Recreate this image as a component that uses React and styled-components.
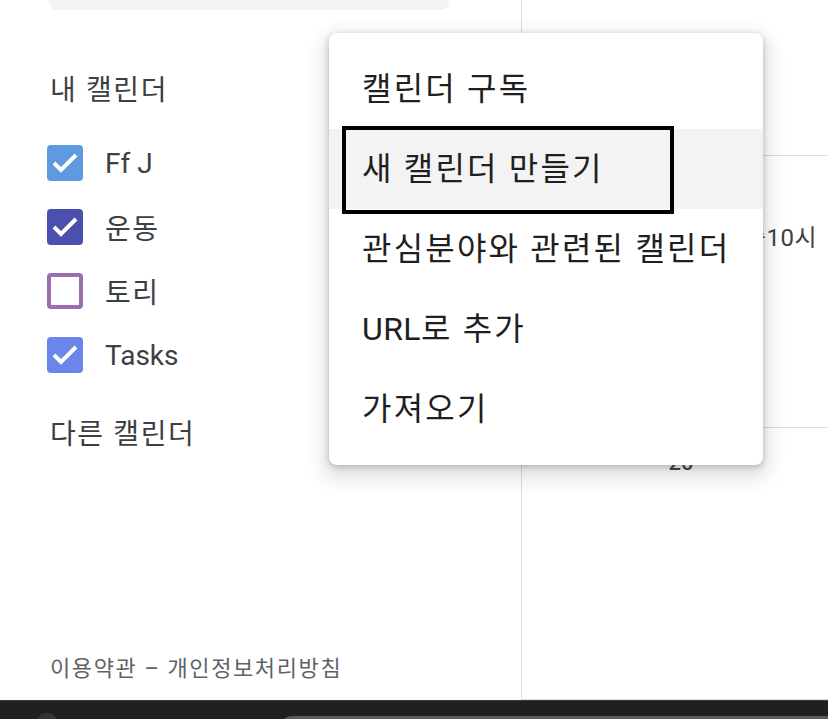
import React from 'react';
import styled, { createGlobalStyle } from 'styled-components';

const GlobalStyle = createGlobalStyle`
  html, body {
    margin: 0;
    padding: 0;
    background: #ffffff;
  }
  body {
    font-family: Roboto, "Noto Sans CJK KR", sans-serif;
    overflow: hidden;
  }
`;

const Page = styled.div`
  position: relative;
  width: 828px;
  height: 719px;
  display: flex;
  flex-direction: column;
  overflow: hidden;
`;

const Main = styled.div`
  height: 701px;
  display: flex;
  background: #ffffff;
`;

const Sidebar = styled.aside`
  width: 521px;
  flex-shrink: 0;
  border-right: 1px solid #dadce0;
  display: flex;
  flex-direction: column;
`;

const SearchStub = styled.div`
  height: 10px;
  margin: 0 72px 0 49px;
  background: #f1f3f4;
  border-radius: 0 0 8px 8px;
`;

const SectionTitle = styled.div`
  height: 40px;
  line-height: 40px;
  padding-left: 50px;
  margin-top: ${(p) => p.top}px;
  font-size: 28px;
  letter-spacing: 1.6px;
  color: #3c4043;
`;

const CalendarList = styled.ul`
  list-style: none;
  margin: 20px 0 0;
  padding: 0;
`;

const CalendarRow = styled.li`
  height: 64px;
  display: flex;
  align-items: center;
  padding-left: 47px;
  gap: 22px;
  font-size: 28px;
  letter-spacing: ${(p) => (p.latin ? '0' : '1.6px')};
  color: #3c4043;
`;

const Box = styled.span`
  width: 36px;
  height: 36px;
  box-sizing: border-box;
  border-radius: 4px;
  display: flex;
  align-items: center;
  justify-content: center;
  background: ${(p) => (p.checked ? p.color : '#ffffff')};
  border: ${(p) => (p.checked ? 'none' : `4px solid ${p.color}`)};
`;

const Footer = styled.div`
  margin-top: auto;
  margin-bottom: 16px;
  padding-left: 50px;
  font-size: 22px;
  letter-spacing: 1.6px;
  line-height: 30px;
  color: #5f6368;
`;

const GridArea = styled.div`
  flex: 1;
  overflow: hidden;
  display: flex;
`;

const DayColumn = styled.div`
  width: 318px;
  flex-shrink: 0;
  display: flex;
  flex-direction: column;
`;

const Cell = styled.div`
  box-sizing: border-box;
  height: ${(p) => p.h}px;
  border-bottom: 1px solid #dadce0;
  display: flex;
  flex-direction: column;
`;

const DateLabel = styled.div`
  margin-top: 21px;
  text-align: center;
  font-size: 22px;
  line-height: 28px;
  font-weight: 500;
  color: #3c4043;
`;

const EventText = styled.div`
  margin-top: 67px;
  margin-left: 222px;
  font-size: 24px;
  line-height: 30px;
  letter-spacing: 0.5px;
  white-space: nowrap;
  color: #3c4043;
`;

const Taskbar = styled.div`
  flex: 1;
  background: #202020;
  border-top: 1px solid #3a3a3a;
  display: flex;
  align-items: flex-start;
  padding-top: 12px;
  gap: 222px;
`;

const TaskButton = styled.span`
  margin-left: 36px;
  width: 22px;
  height: 22px;
  border-radius: 50%;
  background: #353535;
`;

const TaskSearch = styled.span`
  margin-top: 3px;
  flex: 1;
  height: 24px;
  border-radius: 12px 0 0 12px;
  background: #5b5b5b;
`;

const Menu = styled.ul`
  position: absolute;
  left: 329px;
  top: 33px;
  width: 434px;
  margin: 0;
  padding: 16px 0;
  list-style: none;
  background: #ffffff;
  border-radius: 8px;
  box-shadow: 0 8px 18px 6px rgba(60, 64, 67, 0.15),
    0 2px 6px rgba(60, 64, 67, 0.3);
`;

const MenuItem = styled.li`
  position: relative;
  height: 80px;
  line-height: 80px;
  padding-left: 33px;
  font-size: 32px;
  letter-spacing: 2.2px;
  color: #1f1f1f;
  white-space: nowrap;
  background: ${(p) => (p.active ? '#f3f3f3' : 'transparent')};
`;

const Latin = styled.span`
  letter-spacing: 0.4px;
`;

const FocusRing = styled.span`
  position: absolute;
  left: 13px;
  top: -3px;
  width: 332px;
  height: 88px;
  box-sizing: border-box;
  border: 4px solid #000000;
`;

const calendars = [
  { name: 'Ff J', color: '#5f99e0', checked: true, latin: true },
  { name: '운동', color: '#4b50ad', checked: true },
  { name: '토리', color: '#9a6dae', checked: false },
  { name: 'Tasks', color: '#6a86ea', checked: true, latin: true },
];

const menuItems = [
  '캘린더 구독',
  '새 캘린더 만들기',
  '관심분야와 관련된 캘린더',
  <><Latin>URL</Latin>로 추가</>,
  '가져오기',
];

const Check = () => (
  <svg width="36" height="36" viewBox="0 0 36 36">
    <polyline
      points="7,18 14,25 29,10"
      fill="none"
      stroke="#ffffff"
      strokeWidth="4"
    />
  </svg>
);

export default function App() {
  return (
    <Page>
      <GlobalStyle />
      <Main>
        <Sidebar>
          <SearchStub />
          <SectionTitle top={61}>내 캘린더</SectionTitle>
          <CalendarList>
            {calendars.map((c) => (
              <CalendarRow key={c.name} latin={c.latin}>
                <Box color={c.color} checked={c.checked}>
                  {c.checked && <Check />}
                </Box>
                {c.name}
              </CalendarRow>
            ))}
          </CalendarList>
          <SectionTitle top={28}>다른 캘린더</SectionTitle>
          <Footer>이용약관 – 개인정보처리방침</Footer>
        </Sidebar>
        <GridArea>
          <DayColumn>
            <Cell h={156} />
            <Cell h={272}>
              <EventText>중10시</EventText>
            </Cell>
            <Cell h={272}>
              <DateLabel>20</DateLabel>
            </Cell>
          </DayColumn>
        </GridArea>
      </Main>
      <Taskbar>
        <TaskButton />
        <TaskSearch />
      </Taskbar>
      <Menu>
        {menuItems.map((label, i) => (
          <MenuItem key={i} active={i === 1}>
            {label}
            {i === 1 && <FocusRing />}
          </MenuItem>
        ))}
      </Menu>
    </Page>
  );
}
